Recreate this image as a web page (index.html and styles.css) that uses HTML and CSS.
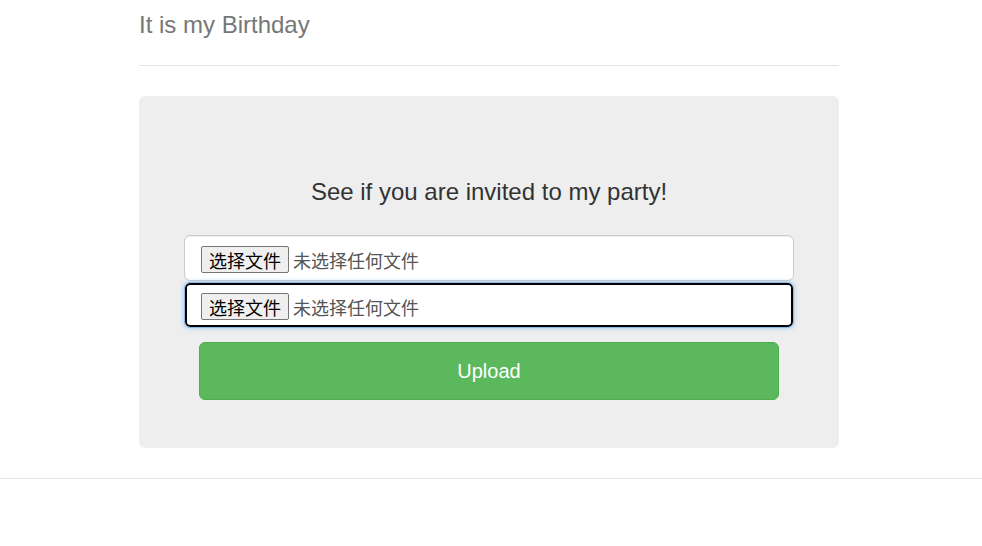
FILE: index.html
```html
<!DOCTYPE html>
<html lang="zh">
<head>
<meta charset="utf-8">
<title>It is my Birthday</title>
<link rel="stylesheet" href="styles.css">
</head>
<body>
<div class="container">
  <div class="header">
    <h3 class="title">It is my Birthday</h3>
  </div>
  <div class="jumbotron">
    <p class="lead">See if you are invited to my party!</p>
    <form class="upload-form">
      <div class="file-input">
        <span class="file-btn">选择文件</span>
        <span class="file-label">未选择任何文件</span>
      </div>
      <div class="file-input focused">
        <span class="file-btn">选择文件</span>
        <span class="file-label">未选择任何文件</span>
      </div>
      <button type="button" class="btn-upload">Upload</button>
    </form>
  </div>
</div>
<div class="footer"></div>
</body>
</html>
```
FILE: styles.css
```css
html, body {
  margin: 0;
  padding: 0;
  background: #fff;
}
body {
  font-family: "Liberation Sans", Arial, "Noto Sans CJK SC", sans-serif;
  color: #333;
}
.container {
  width: 700px;
  margin: 0 auto;
  padding-right: 4px;
}
.header {
  padding: 5px 0 20px;
  border-bottom: 1px solid #e5e5e5;
}
.title {
  margin: 0;
  font-size: 24px;
  line-height: 40px;
  font-weight: normal;
  color: #777;
}
.jumbotron {
  margin-top: 30px;
  background: #eee;
  border-radius: 6px;
  padding: 81px 0 48px;
}
.lead {
  margin: 0;
  text-align: center;
  font-size: 24px;
  line-height: 30px;
  color: #333;
}
.upload-form {
  margin-top: 28px;
  padding: 0 45px;
  display: flex;
  flex-direction: column;
}
.file-input {
  box-sizing: border-box;
  height: 46px;
  background: #fff;
  border: 1px solid #ccc;
  border-radius: 6px;
  box-shadow: inset 0 1px 1px rgba(0,0,0,.075);
  padding: 0 16px;
  display: flex;
  align-items: center;
  gap: 4px;
  font-family: "Noto Sans CJK SC", sans-serif;
  font-size: 18px;
}
.file-input + .file-input {
  margin-top: 1px;
}
.file-input.focused {
  border: 1px solid #86b7e8;
  box-shadow: inset 0 0 0 2px #000, 0 0 5px rgba(102,175,233,.6);
}
.file-btn {
  box-sizing: border-box;
  height: 27px;
  padding: 1px 7px 0;
  display: flex;
  align-items: center;
  background: #efefef;
  border: 1px solid #767676;
  border-radius: 2px;
  color: #000;
  font-family: "Noto Sans CJK SC", sans-serif;
  font-size: 18px;
  margin-top: 3px;
}
.file-label {
  color: #555;
  font-family: "Noto Sans CJK SC", sans-serif;
  font-size: 18px;
  margin-top: 4px;
}
.btn-upload {
  margin: 14px 15px 0;
  height: 58px;
  background: #5cb85c;
  border: 1px solid #4cae4c;
  border-radius: 6px;
  color: #fff;
  font-family: "Liberation Sans", Arial, sans-serif;
  font-size: 20px;
  cursor: pointer;
}
.footer {
  margin-top: 30px;
  border-top: 1px solid #e5e5e5;
  height: 67px;
}
```
